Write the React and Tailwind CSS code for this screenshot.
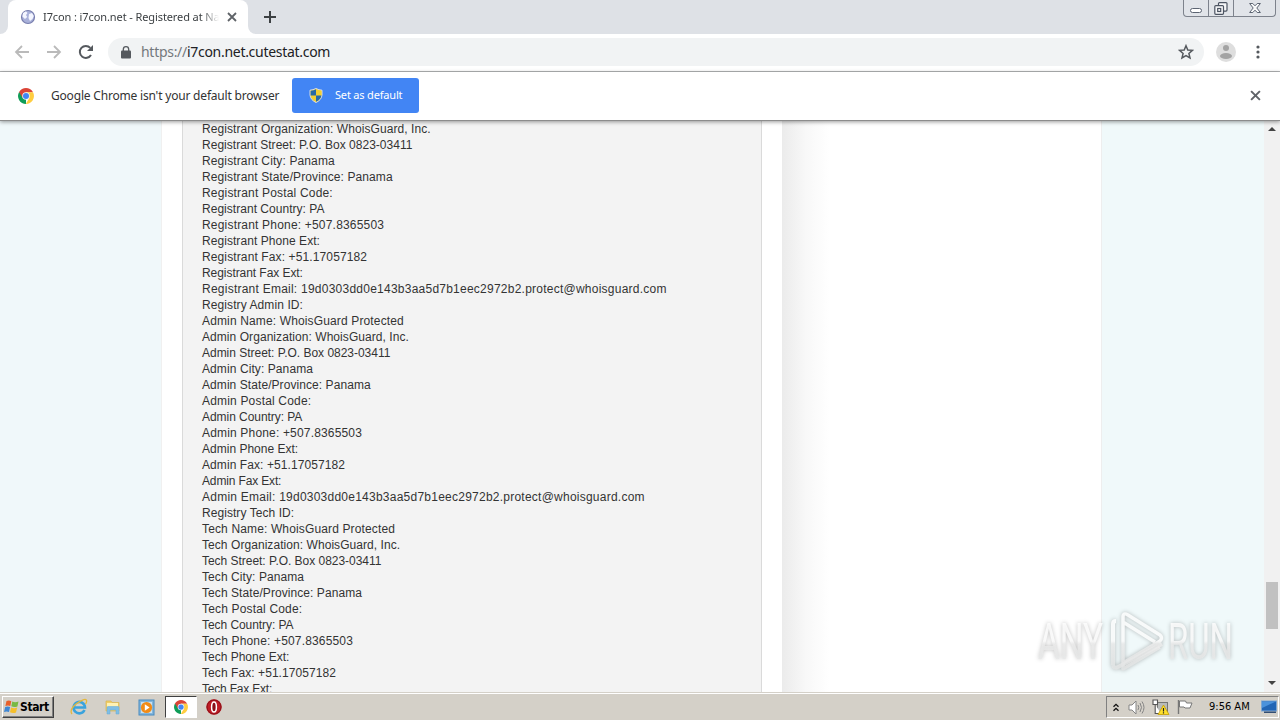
// [text, letter spacing in px]
const lines = [
  ['Registrant Organization: WhoisGuard, Inc.', 0.08],
  ['Registrant Street: P.O. Box 0823-03411', 0.02],
  ['Registrant City: Panama', 0.12],
  ['Registrant State/Province: Panama', 0.1],
  ['Registrant Postal Code:', 0.18],
  ['Registrant Country: PA', 0.03],
  ['Registrant Phone: +507.8365503', 0.19],
  ['Registrant Phone Ext:', 0.06],
  ['Registrant Fax: +51.17057182', 0.12],
  ['Registrant Fax Ext:', -0.06],
  ['Registrant Email: 19d0303dd0e143b3aa5d7b1eec2972b2.protect@whoisguard.com', 0.24],
  ['Registry Admin ID:', 0.09],
  ['Admin Name: WhoisGuard Protected', 0.14],
  ['Admin Organization: WhoisGuard, Inc.', 0.06],
  ['Admin Street: P.O. Box 0823-03411', -0.02],
  ['Admin City: Panama', 0.09],
  ['Admin State/Province: Panama', 0.07],
  ['Admin Postal Code:', 0.18],
  ['Admin Country: PA', -0.05],
  ['Admin Phone: +507.8365503', 0.17],
  ['Admin Phone Ext:', 0.01],
  ['Admin Fax: +51.17057182', 0.08],
  ['Admin Fax Ext:', -0.15],
  ['Admin Email: 19d0303dd0e143b3aa5d7b1eec2972b2.protect@whoisguard.com', 0.24],
  ['Registry Tech ID:', 0.06],
  ['Tech Name: WhoisGuard Protected', 0.14],
  ['Tech Organization: WhoisGuard, Inc.', 0.06],
  ['Tech Street: P.O. Box 0823-03411', -0.03],
  ['Tech City: Panama', 0.08],
  ['Tech State/Province: Panama', 0.07],
  ['Tech Postal Code:', 0.17],
  ['Tech Country: PA', -0.06],
  ['Tech Phone: +507.8365503', 0.16],
  ['Tech Phone Ext:', 0],
  ['Tech Fax: +51.17057182', 0.07],
  ['Tech Fax Ext:', -0.2],
];

function ChromeIcon({ size }) {
  return (
    <svg width={size} height={size} viewBox="0 0 16 16" className="shrink-0">
      <path d="M8 8V16A8 8 0 0 1 1.1 4Z" fill="#0f9d58" />
      <path d="M8 4.2H15L14.9 4A8 8 0 0 0 1.1 4L4.7 10Z" fill="#db4437" />
      <path d="M8 4.2H15A8 8 0 0 1 7.8 16L11.3 10Z" fill="#ffcd40" />
      <circle cx="8" cy="8" r="3.8" fill="#f1f1f1" />
      <circle cx="8" cy="8" r="3" fill="#4285f4" />
    </svg>
  );
}

function Cross({ size }) {
  return (
    <svg width={size} height={size} viewBox="0 0 10 10" fill="none" stroke="#5f6368" strokeWidth="1.8">
      <path d="M1 1 9 9M9 1 1 9" />
    </svg>
  );
}

function TabStrip() {
  return (
    <div className="flex h-[34px] bg-[#dee1e6]">
      <div className="flex w-2 items-end bg-white">
        <div className="h-full w-2 rounded-br-lg bg-[#dee1e6]" />
      </div>
      <div className="flex w-60 items-center rounded-t-lg bg-white pl-3">
        <svg width="16" height="16" viewBox="0 0 16 16" className="shrink-0">
          <circle cx="8" cy="8" r="6.5" fill="#a9b1da" stroke="#777dad" strokeWidth="1.2" />
          <path d="M3 4 6 2.2 7.5 4 6 6 7.2 8 5 10 2.4 7.5ZM9 5 12 4 13.8 7 12.5 10 10 12 8.5 9Z" fill="#f4f6ff" />
        </svg>
        <div className="ml-[7px] w-[176px] whitespace-nowrap font-['Noto_Sans',sans-serif] text-[11px] tracking-[-0.1px] text-[#3c4043] [mask-image:linear-gradient(to_right,black_90%,transparent)]">
          I7con : i7con.net - Registered at Na
        </div>
        <div className="ml-2"><Cross size={10} /></div>
      </div>
      <div className="flex w-2 items-end bg-white">
        <div className="h-full w-2 rounded-bl-lg bg-[#dee1e6]" />
      </div>
      <div className="flex flex-1 items-center pl-2">
        <svg width="12" height="12" viewBox="0 0 12 12" stroke="#3c4043" strokeWidth="2">
          <path d="M6 0V12M0 6H12" />
        </svg>
      </div>
      <div className="mr-1 flex h-[17px] w-[93px] rounded-b-[4px] border border-t-0 border-[#7d828c] bg-[#e1e4e9]">
        <div className="flex w-[25px] border-r border-[#7d828c] pl-[6px] pt-2">
          <div className="h-[5px] w-3 rounded-sm border border-[#5c6472] bg-white" />
        </div>
        <div className="flex w-[25px] justify-center border-r border-[#7d828c] pt-[2px]">
          <svg width="14" height="13" viewBox="0 0 14 13" fill="#f5f6f8" stroke="#4c5462" strokeWidth="1.2">
            <rect x="4.5" y=".6" width="8.5" height="8.5" rx="1" />
            <rect x=".8" y="3.6" width="8.7" height="8.7" rx="1" />
            <rect x="3.7" y="6.5" width="3" height="3" />
          </svg>
        </div>
        <div className="flex flex-1 justify-center pt-[3px]">
          <svg width="12" height="10" viewBox="0 0 12 10" fill="#f8f9fa" stroke="#5c6472" strokeWidth="1">
            <path d="M.6.5H3.8L6 2.8 8.2.5H11.4L7.8 5 11.4 9.5H8.2L6 7.2 3.8 9.5H.6L4.2 5Z" />
          </svg>
        </div>
      </div>
    </div>
  );
}

function Toolbar() {
  return (
    <div className="flex h-[38px] items-center border-b border-[#b3b5b7] bg-white pb-px pl-[14px]">
      <svg width="16" height="14" viewBox="0 0 16 14" fill="none" stroke="#bababa" strokeWidth="1.8">
        <path d="M15 7H2M8 1 2 7 8 13" />
      </svg>
      <svg width="16" height="14" viewBox="0 0 16 14" fill="none" stroke="#bababa" strokeWidth="1.8" className="ml-4">
        <path d="M1 7H14M8 1 14 7 8 13" />
      </svg>
      <svg width="16" height="16" viewBox="0 0 16 16" className="ml-4">
        <path d="M13 11A6 6 0 1 1 12.3 3.9" fill="none" stroke="#55595e" strokeWidth="2" />
        <path d="M15 1V7H9Z" fill="#55595e" />
      </svg>
      <div className="ml-[14px] flex h-7 w-[1096px] items-center rounded-full bg-[#f1f3f4] pl-[13px] pr-[10px]">
        <svg width="10" height="13" viewBox="0 0 10 13">
          <rect y="4.5" width="10" height="8" rx="1" fill="#55595e" />
          <path d="M2.3 5V3.4a2.7 2.7 0 0 1 5.4 0V5" fill="none" stroke="#55595e" strokeWidth="1.3" />
        </svg>
        <div className="ml-[10px] flex-1 pb-px font-['Noto_Sans',sans-serif] text-[14px] tracking-[-0.29px] text-[#202124]">
          <span className="text-[#74787c]">https://</span>i7con.net.cutestat.com
        </div>
        <svg width="16" height="16" viewBox="0 0 16 16" fill="none" stroke="#55595e" strokeWidth="1.5">
          <path d="M8 1.7 9.8 6 14.4 6.3 10.9 9.4 12 13.9 8 11.5 4 13.9 5.1 9.4 1.6 6.3 6.2 6Z" />
        </svg>
      </div>
      <svg width="20" height="20" viewBox="0 0 20 20" className="ml-3">
        <circle cx="10" cy="10" r="10" fill="#dedede" />
        <circle cx="10" cy="6" r="3" fill="#a3a3a3" />
        <ellipse cx="10" cy="14" rx="6" ry="3" fill="#a3a3a3" />
      </svg>
      <svg width="4" height="14" viewBox="0 0 4 14" fill="#55595e" className="ml-5">
        <circle cx="2" cy="2" r="1.6" />
        <circle cx="2" cy="7" r="1.6" />
        <circle cx="2" cy="12" r="1.6" />
      </svg>
    </div>
  );
}

function InfoBar() {
  return (
    <div className="relative z-10 flex h-[49px] items-center border-b border-[#8c8c8c] bg-white pb-px pl-[18px] shadow-[0_1px_4px_rgba(0,0,0,0.4)]">
      <ChromeIcon size={16} />
      <div className="ml-[17px] w-[241px] whitespace-nowrap font-['Noto_Sans',sans-serif] text-[12px] tracking-[-0.19px] text-[#333]">
        Google Chrome isn't your default browser
      </div>
      <div className="flex h-[35px] w-[127px] items-center rounded-[3px] bg-[#4285f4] pl-[17px]">
        <svg width="14" height="15" viewBox="0 0 14 15">
          <path d="M7 .5Q10 2 13 2.2V7Q12.5 12 7 14.5Q1.5 12 1 7V2.2Q4 2 7 .5Z" fill="#f2cf32" stroke="#d7dce5" />
          <path d="M7 1.2V7.5H12.4V2.800Q9 2.300 7 1.2Z" fill="#f2cf32" />
          <path d="M7 1.2V7.5H1.6V2.8Q5 2.3 7 1.2ZM7 7.5H12.4Q11.8 11.5 7 13.8Z" fill="#2869a5" />
        </svg>
        <div className="ml-3 whitespace-nowrap font-['Noto_Sans',sans-serif] text-[11px] tracking-[-0.18px] text-white">Set as default</div>
      </div>
      <div className="ml-auto mr-[19px]"><Cross size={11} /></div>
    </div>
  );
}

function Watermark() {
  return (
    <svg width="230" height="90" viewBox="0 0 230 90" className="absolute left-[1030px] top-[480px] drop-shadow-[0_0_2px_rgba(0,0,0,0.3)]">
      <defs>
        <linearGradient id="fade" x1="0" y1="10" x2="0" y2="70" gradientUnits="userSpaceOnUse">
          <stop offset="0.5" stopColor="#fff" />
          <stop offset="0.55" stopColor="#ececec" />
          <stop offset="1" stopColor="#e2e4e4" />
        </linearGradient>
      </defs>
      <g fill="none" stroke="url(#fade)" strokeOpacity="0.85" strokeWidth="4" strokeLinejoin="round">
        <path d="M83 64V23Q83 20 86 20M83 64Q84 68 88 66L132 43" />
        <path d="M93 48V16Q93 11 98 14L130 34Q133 37 130 40L93 62V21L125 41M93 62V68L130 46" strokeWidth="3.5" />
      </g>
      <g fill="url(#fade)" fillOpacity="0.8" fontFamily="Roboto, sans-serif" fontSize="50">
        <text x="8" y="58" textLength="65" lengthAdjust="spacingAndGlyphs">ANY</text>
        <text x="138" y="58" textLength="65" lengthAdjust="spacingAndGlyphs">RUN</text>
      </g>
    </svg>
  );
}

function PageView() {
  return (
    <div className="relative flex h-[571px] overflow-hidden bg-[#f0f9fa]">
      <div className="w-[161px] shrink-0 bg-[#f0f8fa]" />
      <div className="flex w-[941px] shrink-0 bg-white">
        <div className="w-[21px] border-l border-[#f0f0f0]" />
        <div className="w-[580px] border-x border-[#dadada] bg-[#f3f3f3] pl-[19px]">
          {lines.map(([text, spacing]) => (
            <div
              key={text}
              className="h-4 whitespace-nowrap font-['Liberation_Sans',Arial,sans-serif] text-[12px] leading-4 text-[#333]"
              style={{ letterSpacing: `${spacing}px` }}
            >
              {text}
            </div>
          ))}
        </div>
        <div className="w-5" />
        <div className="w-12 bg-linear-to-r from-[#ebebeb] via-[#f8f8f8] to-white" />
        <div className="flex-1 border-r border-[#eee]" />
      </div>
      <div className="flex-1" />
      <div className="flex w-4 flex-col items-center bg-[#f1f1f1]">
        <svg width="8" height="4" viewBox="0 0 8 4" fill="#444" className="mt-[6px]"><path d="M4 0 8 4H0Z" /></svg>
        <div className="mt-[451px] h-[47px] w-3 bg-[#c1c1c1]" />
        <svg width="8" height="4" viewBox="0 0 8 4" fill="#444" className="mt-[52px]"><path d="M0 0H8L4 4Z" /></svg>
      </div>
      <Watermark />
    </div>
  );
}

function Taskbar() {
  return (
    <div className="flex h-7 items-center border-t border-[#d4d0c8] bg-[#d4d0c8] pl-[2px] pt-px font-['DejaVu_Sans_Condensed','DejaVu_Sans',sans-serif] shadow-[inset_0_1px_0_#fff]">
      <div className="flex h-[22px] w-[52px] items-center border border-b-[#404040] border-l-white border-r-[#404040] border-t-white pl-px shadow-[inset_-1px_-1px_0_#808080]">
        <svg width="16" height="16" viewBox="0 0 16 16" className="shrink-0">
          <path d="M2.5 2Q5 .8 7.3 2.2L6.3 7Q4 5.8 1.4 7Z" fill="#e8602b" />
          <path d="M8.3 2.5Q11 4 14.5 2.5L13.4 7.5Q10 8.6 7.3 7.3Z" fill="#78b943" />
          <path d="M1.2 8Q3.7 6.8 6.1 8.1L5 13Q2.5 11.8 0 13Z" fill="#3f87d4" />
          <path d="M7.1 8.4Q10 9.8 13.2 8.5L12 13.5Q9 14.7 6 13.3Z" fill="#f5bf2b" />
        </svg>
        <div className="text-[12px] font-bold tracking-[-0.4px] text-black">Start</div>
      </div>
      <svg width="18" height="18" viewBox="0 0 18 18" className="ml-4">
        <path d="M14.5 12A5.7 5.7 0 1 1 15 9.5H5" fill="none" stroke="#3aa3dd" strokeWidth="2.6" />
        <path d="M2 16Q-1 12 6 6 15 -.5 16.5 2.3 17 4 15.5 6" fill="none" stroke="#e4b83c" strokeWidth="1.3" />
      </svg>
      <svg width="18" height="18" viewBox="0 0 18 18" className="ml-4">
        <path d="M2 3H7L8 4.5H15V13H2Z" fill="#f0ce68" stroke="#d8b552" strokeWidth=".7" />
        <path d="M3 5H14V9H3Z" fill="#fff2b4" />
        <path d="M3 16V9.5Q3 8.5 4 8.5H14Q15 8.5 15 9.5V16H12V12H6V16Z" fill="#7fbee5" stroke="#65a8d4" strokeWidth=".5" />
      </svg>
      <svg width="17" height="17" viewBox="0 0 17 17" className="ml-4">
        <rect x="1" y="1" width="15" height="15" fill="#83b6dc" stroke="#478ac0" />
        <rect x="3" y="3" width="11" height="11" fill="#c8e1f1" />
        <circle cx="8.5" cy="8.5" r="5.6" fill="#f28b16" />
        <path d="M6.8 5.3 11.6 8.5 6.8 11.7Z" fill="#fff" />
      </svg>
      <div className="ml-[10px] flex h-[22px] w-[32px] items-center justify-center border border-b-white border-l-[#404040] border-r-white border-t-[#404040] bg-white">
        <ChromeIcon size={14} />
      </div>
      <svg width="16" height="16" viewBox="0 0 16 16" className="ml-[9px]">
        <circle cx="8" cy="8" r="7.7" fill="#bf1c25" />
        <circle cx="8" cy="8" r="7" fill="none" stroke="#8a1018" />
        <ellipse cx="8" cy="8" rx="2.4" ry="5" fill="#8a1018" stroke="#fff" strokeWidth="1.5" />
      </svg>
      <div className="ml-auto mr-px flex h-[22px] w-[173px] items-center border border-b-white border-l-[#808080] border-r-white border-t-[#808080] pl-[6px]">
        <svg width="6" height="9" viewBox="0 0 6 9" fill="none" stroke="#111" strokeWidth="1.3">
          <path d="M.5 3.8 3 1.3 5.5 3.8M.5 7.8 3 5.3 5.5 7.8" />
        </svg>
        <svg width="18" height="15" viewBox="0 0 18 15" fill="none" stroke="#858585" className="ml-[9px]">
          <path d="M1 5H4L8 1V14L4 10H1Z" fill="#fff" />
          <path d="M10 5Q11.5 7.5 10 10M12 3Q15 7.5 12 12M14 1.5Q18 7.5 14 13.5" />
        </svg>
        <svg width="18" height="17" viewBox="0 0 18 17" className="ml-[6px]">
          <rect x="5.5" y="3.5" width="10" height="9" fill="#b9bbb9" stroke="#747674" />
          <path d="M1 1H5.5V5.5H1ZM3.2 5.5V14.5H9" fill="#fff" stroke="#555" strokeWidth="1.1" />
          <path d="M11.5 6 17 15.5H6Z" fill="#ffe02c" stroke="#c49d00" strokeWidth=".8" />
          <path d="M11.5 9V12.5M11.5 13.3V14.4" stroke="#222" strokeWidth="1.2" />
        </svg>
        <svg width="17" height="16" viewBox="0 0 17 16" className="ml-[7px]">
          <path d="M1.5 1V15" stroke="#777" strokeWidth="1.4" />
          <path d="M2.5 2H8.5L9.5 4H15L13 9H8L7 8H2.5Z" fill="#fff" stroke="#777" />
        </svg>
        <div className="ml-[15px] whitespace-nowrap text-[11px] text-black">9:56 AM</div>
        <svg width="16" height="14" viewBox="0 0 16 14" className="ml-auto mr-px">
          <rect x=".5" y="1" width="15" height="10" fill="#2265b5" stroke="#7ea6d2" />
          <path d="M1 1.5H15L1 8Z" fill="#4b92dc" />
          <rect x="3" y="11.5" width="12" height="1.5" fill="#334e73" />
        </svg>
      </div>
    </div>
  );
}

export default function App() {
  return (
    <div className="flex h-[720px] w-[1280px] flex-col overflow-hidden bg-white">
      <TabStrip />
      <Toolbar />
      <InfoBar />
      <PageView />
      <Taskbar />
    </div>
  );
}
